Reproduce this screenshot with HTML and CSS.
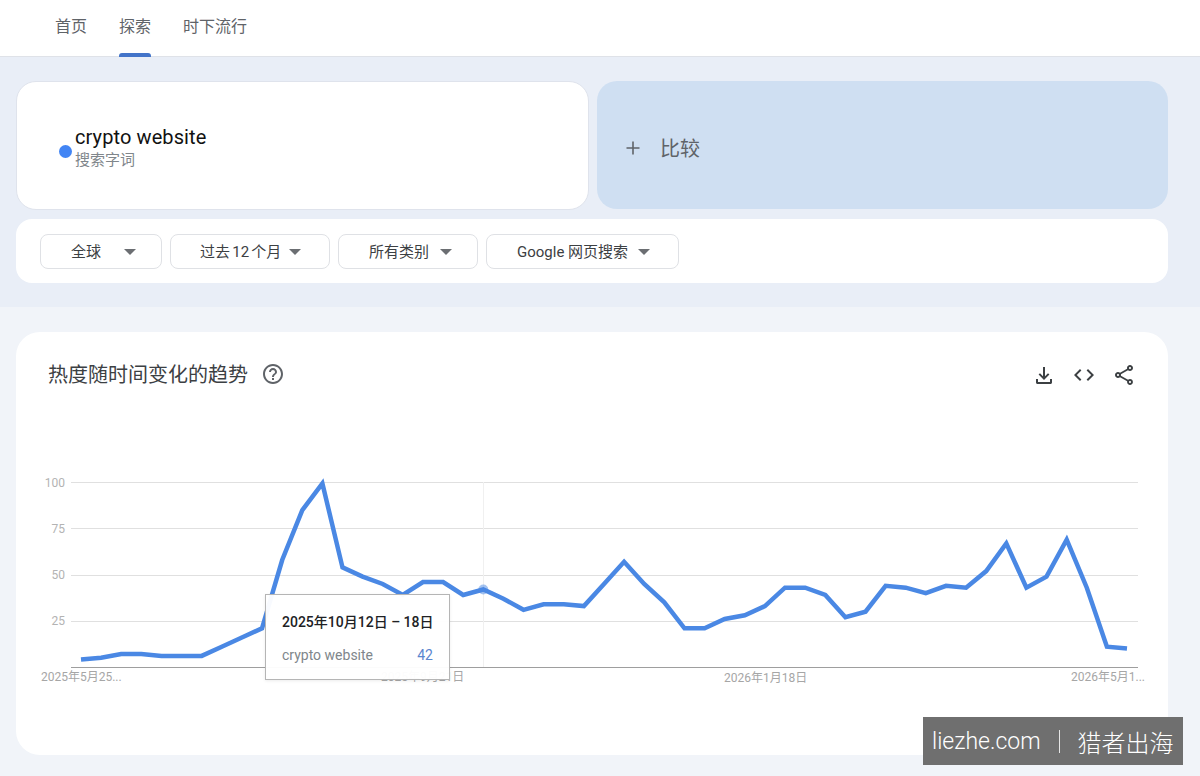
FILE: index.html
```html
<!DOCTYPE html>
<html lang="zh-CN">
<head>
  <meta charset="UTF-8" />
  <title>Google 趋势 - 探索</title>
  <link rel="stylesheet" href="styles.css">
</head>
<body>
  <nav class="nav">
    <a class="nav-item">首页</a>
    <a class="nav-item active">探索</a>
    <a class="nav-item">时下流行</a>
  </nav>

  <section class="explore">
    <div class="terms">
      <div class="term-card">
        <span class="term-dot"></span>
        <div class="term-text">
          <div class="term-name">crypto website</div>
          <div class="term-type">搜索字词</div>
        </div>
      </div>
      <div class="compare-card">
        <svg class="compare-plus" width="16" height="16" viewBox="0 0 16 16"><path d="M8 1.5v13M1.5 8h13" /></svg>
        <span class="compare-label">比较</span>
      </div>
    </div>
    <div class="filters">
      <button class="filter filter-geo"><span>全球</span><i class="caret"></i></button>
      <button class="filter filter-time"><span class="tight">过去 12 个月</span><i class="caret"></i></button>
      <button class="filter filter-cat"><span>所有类别</span><i class="caret"></i></button>
      <button class="filter filter-prop"><span>Google 网页搜索</span><i class="caret"></i></button>
    </div>
  </section>

  <section class="results">
    <div class="chart-card">
      <div class="chart-head">
        <h2 class="chart-title">热度随时间变化的趋势</h2>
        <svg class="help-icon" width="24" height="24" viewBox="0 0 24 24">
          <path fill="#5f6368" d="M11 18h2v-2h-2v2zm1-16C6.48 2 2 6.48 2 12s4.48 10 10 10 10-4.48 10-10S17.52 2 12 2zm0 18c-4.41 0-8-3.59-8-8s3.59-8 8-8 8 3.590 8 8-3.590 8-8 8zm0-14c-2.210 0-4 1.790-4 4h2c0-1.100.9-2 2-2s2 .9 2 2c0 2-3 1.750-3 5h2c0-2.250 3-2.500 3-5 0-2.210-1.790-4-4-4z" />
        </svg>
        <div class="chart-actions">
          <svg width="24" height="24" viewBox="0 0 24 24"><path fill="#3c4043" d="M11 4h2v9.200l3-3 1.400 1.400L12 17l-5.400-5.400L8 10.200l3 3V4zM4 16h2v3h12v-3h2v3.500c0 .8-.7 1.500-1.500 1.500h-13C4.700 21 4 20.300 4 19.500V16z" /></svg>
          <svg width="24" height="24" viewBox="0 0 24 24"><path fill="#3c4043" d="M9.400 16.600 4.800 12l4.600-4.600L8 6l-6 6 6 6 1.400-1.400zm5.200 0 4.600-4.600-4.600-4.600L16 6l6 6-6 6-1.400-1.400z" /></svg>
          <svg width="24" height="24" viewBox="0 0 24 24"><path fill="#3c4043" d="M18 16.080c-.76 0-1.440.3-1.960.77L8.910 12.700c.05-.23.09-.46.09-.7s-.04-.47-.09-.7l7.050-4.110c.54.5 1.250.81 2.040.81 1.660 0 3-1.340 3-3s-1.340-3-3-3-3 1.340-3 3c0 .24.04.47.09.7L8.040 9.810C7.500 9.310 6.790 9 6 9c-1.660 0-3 1.340-3 3s1.340 3 3 3c.79 0 1.500-.31 2.040-.81l7.120 4.160c-.05.21-.08.43-.08.65 0 1.610 1.310 2.920 2.920 2.920s2.920-1.310 2.920-2.920-1.310-2.920-2.920-2.920zM18 4c.55 0 1 .45 1 1s-.45 1-1 1-1-.45-1-1 .45-1 1-1zM6 13c-.55 0-1-.45-1-1s.45-1 1-1 1 .45 1 1-.45 1-1 1zm12 7.020c-.55 0-1-.45-1-1s.45-1 1-1 1 .45 1 1-.45 1-1 1z" /></svg>
        </div>
      </div>

      <div class="chart">
        <!-- viewBox uses page coordinates so the points read straight off the screenshot -->
        <svg class="chart-svg" width="1152" height="230" viewBox="16 470 1152 230">
          <g class="grid">
            <line x1="71" y1="482.500" x2="1138" y2="482.500" />
            <line x1="71" y1="528.500" x2="1138" y2="528.500" />
            <line x1="71" y1="575.500" x2="1138" y2="575.500" />
            <line x1="71" y1="621.500" x2="1138" y2="621.500" />
          </g>
          <line class="axis" x1="71" y1="667.500" x2="1138" y2="667.500" />
          <line class="hover-line" x1="483.500" y1="482" x2="483.500" y2="667" />
          <g class="y-labels">
            <text x="65" y="487">100</text>
            <text x="65" y="533">75</text>
            <text x="65" y="579">50</text>
            <text x="65" y="625">25</text>
          </g>
          <g class="x-labels">
            <text x="41" y="681">2025年5月25...</text>
            <text x="381" y="681">2025年9月21日</text>
            <text x="724" y="682">2026年1月18日</text>
            <text x="1071" y="681">2026年5月1...</text>
          </g>
          <polyline class="trend" points="81,659.600 101.100,657.800 121.200,654.100 141.300,654.100 161.500,655.900 181.600,655.900 201.700,655.900 221.800,646.700 241.900,637.500 262,628.300 282.200,560 302.300,510.200 322.400,483.500 342.500,567.400 362.600,576.600 382.700,584 402.800,595 423,582.100 443.100,582.100 463.200,595 483.300,589.500 503.400,598.700 523.500,609.800 543.600,604.300 563.800,604.300 583.900,606.100 604,584 624.100,561.800 644.200,584 664.300,602.400 684.500,628.300 704.600,628.300 724.700,619 744.800,615.300 764.900,606.100 785,587.700 805.200,587.700 825.300,595 845.400,617.200 865.500,611.700 885.600,585.800 905.700,587.700 925.800,593.200 946,585.800 966.100,587.700 986.200,571.100 1006.300,543.400 1026.400,587.700 1046.500,576.600 1066.700,539.700 1086.800,587.700 1106.900,646.700 1127,648.600" />
          <circle class="hover-dot" cx="483.300" cy="589.500" r="5" />
        </svg>
        <div class="tooltip">
          <div class="tooltip-date">2025年10月12日 – 18日</div>
          <div class="tooltip-row">
            <span class="tooltip-name">crypto website</span>
            <span class="tooltip-value">42</span>
          </div>
        </div>
      </div>
    </div>
  </section>

  <div class="watermark">
    <span class="watermark-site">liezhe.com</span>
    <span class="watermark-bar"></span>
    <span class="watermark-name">猎者出海</span>
  </div>
</body>
</html>
```
FILE: styles.css
```css
* {
  box-sizing: border-box;
}

html, body {
  height: 776px;
}

body {
  margin: 0;
  position: relative;
  overflow: hidden;
  background: #f1f4f9;
  font-family: Roboto, "Noto Sans CJK SC", sans-serif;
  color: #202124;
}

/* top nav */
.nav {
  display: flex;
  gap: 32px;
  height: 57px;
  padding-left: 55px;
  background: #fff;
  border-bottom: 1px solid #dfe2e8;
}

.nav-item {
  position: relative;
  font-size: 16px;
  line-height: 54px;
  color: #5f6368;
}

.nav-item.active::after {
  content: "";
  position: absolute;
  left: 0;
  right: 0;
  bottom: -1px;
  height: 4px;
  background: #4374c9;
  border-radius: 3px 3px 0 0;
}

/* search terms and filters */
.explore {
  height: 250px;
  padding: 24px 32px 0 16px;
  background: #e9eef7;
}

.terms {
  display: flex;
  gap: 8px;
}

.term-card {
  display: flex;
  align-items: center;
  width: 573px;
  height: 129px;
  padding: 7px 0 0 42px;
  background: #fff;
  border: 1px solid #dfe3ec;
  border-radius: 20px;
}

.term-dot {
  width: 13px;
  height: 13px;
  margin: 5px 3px 0 0;
  background: #4285f4;
  border-radius: 50%;
}

.term-text {
  margin-top: -5px;
}

.term-name {
  font-size: 20px;
  line-height: 26px;
  letter-spacing: 0.100px;
  color: #111;
}

.term-type {
  font-size: 15px;
  line-height: 20px;
  color: #80868b;
}

.compare-card {
  display: flex;
  align-items: center;
  width: 571px;
  height: 128px;
  padding: 5px 0 0 28px;
  background: #cfdff2;
  border-radius: 20px;
}

.compare-plus {
  margin-right: 19px;
}

.compare-plus path {
  fill: none;
  stroke: #5f6368;
  stroke-width: 1.600;
}

.compare-label {
  font-size: 20px;
  color: #5f6368;
}

.filters {
  display: flex;
  gap: 8px;
  height: 64px;
  margin-top: 9px;
  padding: 15px 24px 0;
  background: #fff;
  border-radius: 16px;
}

.filter {
  display: flex;
  align-items: center;
  justify-content: space-between;
  height: 35px;
  padding: 0 12px 0 30px;
  background: #fff;
  border: 1px solid #dfe1e5;
  border-radius: 8px;
  font-family: inherit;
  font-size: 15px;
  color: #3c4043;
}

.filter span {
  margin-top: -3px;
}

/* the digits and spaces sit closer together here */
.filter .tight {
  margin-left: -1px;
  word-spacing: -1.500px;
}

.filter-geo { width: 122px; padding-right: 25px; }
.filter-time { width: 160px; padding-right: 28px; }
.filter-cat { width: 140px; padding-right: 25px; }
.filter-prop { width: 193px; padding-right: 28px; }

.caret {
  width: 0;
  height: 0;
  border-left: 6px solid transparent;
  border-right: 6px solid transparent;
  border-top: 6px solid #6b6e72;
}

/* trend chart */
.results {
  padding: 25px 32px 0 16px;
}

.chart-card {
  height: 423px;
  background: #fff;
  border-radius: 24px;
}

.chart-head {
  display: flex;
  align-items: center;
  height: 84px;
  padding: 0 32px;
}

.chart-title {
  margin: -2px 0 0;
  font-size: 20px;
  font-weight: 400;
  color: #3c4043;
}

.help-icon {
  margin-left: 13px;
}

.chart-actions {
  display: flex;
  gap: 16px;
  margin-left: auto;
  padding-top: 1px;
}

.chart {
  position: relative;
  margin-top: 54px;
}

.chart-svg {
  display: block;
}

.grid line {
  stroke: #e0e0e0;
  stroke-width: 1;
}

.axis {
  stroke: #9e9e9e;
  stroke-width: 1;
}

.hover-line {
  stroke: #f0f0f0;
  stroke-width: 1;
}

.y-labels text {
  font-size: 12px;
  fill: #b3b3b3;
  text-anchor: end;
}

.x-labels text {
  font-size: 12px;
  fill: #a6a6a6;
}

.trend {
  fill: none;
  stroke: #4a88e4;
  stroke-width: 4.500;
  stroke-linejoin: miter;
}

.hover-dot {
  fill: #4a88e4;
  opacity: 0.5;
}

.tooltip {
  position: absolute;
  left: 249px;
  top: 124px;
  width: 185px;
  height: 86px;
  padding: 18px 16px 0;
  background: rgba(255, 255, 255, 0.96);
  border: 1px solid #b5b5b5;
  box-shadow: 0 1px 3px rgba(0, 0, 0, 0.08);
}

.tooltip-date {
  font-size: 14px;
  font-weight: 500;
  line-height: 18px;
  color: #202124;
  white-space: nowrap;
}

.tooltip-row {
  display: flex;
  justify-content: space-between;
  margin-top: 15px;
  font-size: 14px;
  line-height: 18px;
}

.tooltip-name {
  color: #80868b;
}

.tooltip-value {
  color: #5a86cf;
}

/* watermark over the corner */
.watermark {
  position: absolute;
  left: 923px;
  top: 717px;
  display: flex;
  align-items: center;
  width: 260px;
  height: 48px;
  padding-left: 9px;
  background: #6f6f6f;
  color: #fff;
}

.watermark-site {
  font-size: 23px;
  font-weight: 300;
}

.watermark-bar {
  width: 1px;
  height: 23px;
  margin: 0 18px;
  background: #e6e6e6;
}

.watermark-name {
  font-size: 24px;
  font-weight: 300;
}
```
